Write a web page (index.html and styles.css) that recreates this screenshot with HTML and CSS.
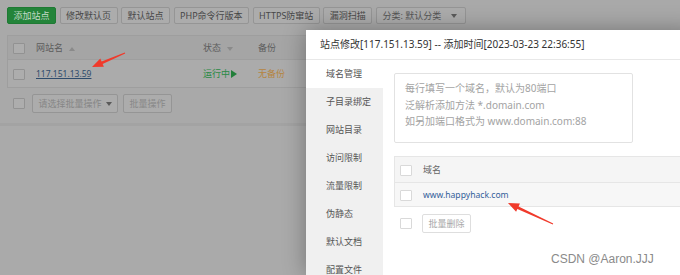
FILE: index.html
```html
<!DOCTYPE html>
<html>

<head>
    <meta charset="utf-8">
    <link rel="stylesheet" href="styles.css">
</head>

<body>
    <section class="site_page">
        <div class="toolbar">
            <button class="btn btn_green">添加站点</button>
            <button class="btn">修改默认页</button>
            <button class="btn">默认站点</button>
            <button class="btn">PHP命令行版本</button>
            <button class="btn">HTTPS防窜站</button>
            <button class="btn">漏洞扫描</button>
            <div class="btn select_type">分类: 默认分类<span class="caret"></span></div>
        </div>

        <table class="site_table">
            <thead>
                <tr>
                    <th class="col_check"><span class="check"></span></th>
                    <th class="col_name">网站名 <span class="sort_up"></span></th>
                    <th class="col_status">状态 <span class="sort_down"></span></th>
                    <th class="col_backup">备份</th>
                </tr>
            </thead>
            <tbody>
                <tr>
                    <td class="col_check"><span class="check"></span></td>
                    <td class="col_name"><a class="site_link" href="#">117.151.13.59</a></td>
                    <td class="col_status"><span class="running">运行中<span class="play"></span></span></td>
                    <td class="col_backup"><span class="no_backup">无备份</span></td>
                </tr>
            </tbody>
        </table>

        <div class="table_footer">
            <span class="check"></span>
            <div class="btn select_batch">请选择批量操作<span class="caret"></span></div>
            <button class="btn btn_batch">批量操作</button>
        </div>
    </section>

    <div class="layer">
        <div class="layer_title">站点修改[117.151.13.59] -- 添加时间[2023-03-23 22:36:55]</div>
        <div class="layer_body">
            <ul class="tab_nav">
                <li class="on">域名管理</li>
                <li>子目录绑定</li>
                <li>网站目录</li>
                <li>访问限制</li>
                <li>流量限制</li>
                <li>伪静态</li>
                <li>默认文档</li>
                <li>配置文件</li>
            </ul>
            <div class="tab_content">
                <div class="domain_input">
                    <p>每行填写一个域名，默认为80端口</p>
                    <p>泛解析添加方法 *.domain.com</p>
                    <p>如另加端口格式为 www.domain.com:88</p>
                </div>

                <table class="domain_table">
                    <thead>
                        <tr>
                            <th class="col_check"><span class="check"></span></th>
                            <th>域名</th>
                        </tr>
                    </thead>
                    <tbody>
                        <tr>
                            <td class="col_check"><span class="check"></span></td>
                            <td><a class="domain_link" href="#">www.happyhack.com</a></td>
                        </tr>
                    </tbody>
                </table>

                <div class="domain_footer">
                    <span class="check"></span>
                    <button class="btn_del">批量删除</button>
                </div>
            </div>
        </div>
    </div>

    <!-- red annotation arrows -->
    <svg class="marks" width="680" height="275" viewBox="0 0 680 275">
        <polygon points="124.8,52.6 101.6,61.5 100.3,58.6 92,67 103.9,66.8 102.6,63.9 125.2,53.4" />
        <polygon points="553.2,223.6 518.6,206.5 519.9,203.6 508,203 516.1,211.8 517.4,208.9 552.8,224.4" />
    </svg>

    <div class="watermark">CSDN @Aaron.JJJ</div>
</body>

</html>
```

FILE: styles.css
```css
body {
    margin: 0;
    width: 680px;
    height: 275px;
    overflow: hidden;
    position: relative;
    background: #aaaaaa;
    font-family: "Noto Sans", "Noto Sans CJK SC", sans-serif;
    font-size: 9px;
}

.site_page {
    height: 126px;
    box-sizing: border-box;
    padding: 7px;
    background: #a9a9a9;
    border-bottom: 3px solid #a3a3a3;
}

.toolbar {
    display: flex;
    gap: 3.5px;
}

.btn {
    height: 17px;
    box-sizing: border-box;
    padding: 0 5.5px;
    border: 1px solid #959595;
    border-radius: 2px;
    background: #acacac;
    color: #474747;
    font-family: "Noto Sans", "Noto Sans CJK SC", sans-serif;
    font-size: 9px;
    line-height: 15px;
    white-space: nowrap;
}

.btn_green {
    background: #23843a;
    border-color: #1f7a34;
    color: #c4dac8;
}

.select_type {
    width: 90px;
    display: flex;
    justify-content: space-between;
    align-items: center;
    padding-right: 8px;
    color: #555;
}

.caret {
    width: 0;
    height: 0;
    border-left: 3.5px solid transparent;
    border-right: 3.5px solid transparent;
    border-top: 4px solid #5a5a5a;
}

.check {
    display: inline-block;
    width: 12px;
    height: 11px;
    box-sizing: border-box;
    border: 1px solid #929292;
    border-radius: 1px;
    background: #adadad;
    vertical-align: middle;
}

.site_table {
    margin-top: 11px;
    width: 100%;
    border-collapse: collapse;
    border: 1px solid #9e9e9e;
}

.site_table th,
.site_table td {
    padding: 0;
    text-align: left;
    font-weight: normal;
    white-space: nowrap;
}

.site_table th {
    height: 23px;
    background: #a5a5a5;
    color: #5c5c5c;
}

.site_table td {
    height: 27px;
    background: #ababab;
    border-top: 1px solid #9e9e9e;
}

.site_table .col_check {
    width: 23px;
    padding-left: 5px;
}

.site_table .col_name {
    width: 167px;
}

.site_table .col_status {
    width: 55px;
}

.sort_up,
.sort_down {
    display: inline-block;
    width: 0;
    height: 0;
    margin-left: 4px;
    border-left: 3.5px solid transparent;
    border-right: 3.5px solid transparent;
    vertical-align: middle;
}

.sort_up {
    border-bottom: 4px solid #8a8a8a;
}

.sort_down {
    border-top: 4px solid #8a8a8a;
}

.site_link {
    color: #2f4c6c;
    font-size: 8.5px;
    text-decoration: underline;
}

.running {
    color: #2a8a45;
}

.play {
    display: inline-block;
    width: 0;
    height: 0;
    border-top: 4px solid transparent;
    border-bottom: 4px solid transparent;
    border-left: 6px solid #227f3a;
    margin-left: 1px;
    vertical-align: -1px;
}

.no_backup {
    color: #b5843f;
}

.table_footer {
    display: flex;
    align-items: center;
    margin-top: 6px;
    padding-left: 6px;
}

.select_batch {
    width: 86px;
    height: 19px;
    margin-left: 7px;
    display: flex;
    justify-content: space-between;
    align-items: center;
    padding-right: 5px;
    color: #868686;
}

.btn_batch {
    width: 49px;
    height: 19px;
    margin-left: 5px;
    color: #888;
}

/* edit dialog */
.layer {
    position: absolute;
    left: 306px;
    top: 30px;
    width: 390px;
    height: 245px;
    overflow: hidden;
    background: #fff;
    box-shadow: 0 0 22px rgba(0, 0, 0, .32);
}

.layer_title {
    height: 30px;
    box-sizing: border-box;
    line-height: 28px;
    padding-left: 14px;
    font-size: 10px;
    color: #333;
    border-bottom: 1px solid #e8e8e8;
    white-space: nowrap;
}

.layer_body {
    display: flex;
    height: 215px;
}

.tab_nav {
    width: 77px;
    margin: 0;
    padding: 0;
    list-style: none;
    background: #f0f0f0;
}

.tab_nav li {
    height: 28px;
    line-height: 28px;
    padding-left: 20px;
    color: #555;
}

.tab_nav li.on {
    background: #fff;
}

.tab_content {
    flex: 1;
    padding: 13px 0 0 11px;
}

.domain_input {
    width: 239px;
    height: 70px;
    box-sizing: border-box;
    padding: 6px 10px;
    border: 1px solid #e2e2e2;
    border-radius: 2px;
    color: #a3a3a3;
    font-size: 10px;
    line-height: 16.5px;
}

.domain_input p {
    margin: 0;
}

.domain_table {
    margin-top: 13px;
    width: 100%;
    border-collapse: collapse;
    border: 1px solid #e6e6e6;
}

.domain_table th,
.domain_table td {
    padding: 0;
    text-align: left;
    font-weight: normal;
}

.domain_table th {
    height: 25px;
    background: #f5f5f5;
    color: #666;
}

.domain_table td {
    height: 23px;
    background: #f7f7f7;
    border-top: 1px solid #e6e6e6;
}

.domain_table .col_check {
    width: 23px;
    padding-left: 5px;
}

.layer .check {
    border-color: #d9d9d9;
    background: #fff;
}

.domain_link {
    color: #34609a;
    font-size: 8.6px;
    text-decoration: none;
}

.domain_footer {
    display: flex;
    align-items: center;
    gap: 10px;
    margin-top: 7px;
    padding-left: 6px;
}

.btn_del {
    width: 49px;
    height: 19px;
    padding: 0;
    border: 1px solid #dedede;
    border-radius: 2px;
    background: #fff;
    color: #a8a8a8;
    font-family: "Noto Sans", "Noto Sans CJK SC", sans-serif;
    font-size: 9px;
}

.marks {
    position: absolute;
    left: 0;
    top: 0;
    pointer-events: none;
}

.marks polygon {
    fill: #f03a2b;
}

.watermark {
    position: absolute;
    left: 551px;
    top: 252px;
    font-family: "Liberation Sans", sans-serif;
    font-size: 12px;
    color: #8a8a8a;
    white-space: nowrap;
}
```
